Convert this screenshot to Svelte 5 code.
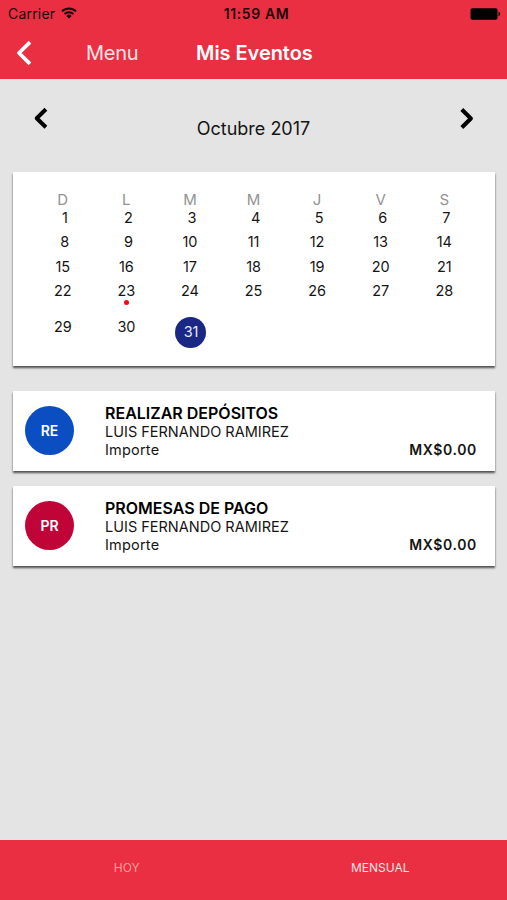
<script lang="ts">
	interface CalendarDay {
		day: number;
		selected: boolean;
		has_event: boolean;
	}

	interface CalendarEvent {
		initials: string;
		kind: string;
		title: string;
		client: string;
		amount: string;
	}

	let weekdays = ['D', 'L', 'M', 'M', 'J', 'V', 'S'];

	let selected_day = $state(31);
	let active_tab = $state('MENSUAL');
	let tabs = ['HOY', 'MENSUAL'];
	let event_days = [23];

	let events: CalendarEvent[] = [
		{
			initials: 'RE',
			kind: 'deposit',
			title: 'REALIZAR DEPÓSITOS',
			client: 'LUIS FERNANDO RAMIREZ',
			amount: 'MX$0.00'
		},
		{
			initials: 'PR',
			kind: 'promise',
			title: 'PROMESAS DE PAGO',
			client: 'LUIS FERNANDO RAMIREZ',
			amount: 'MX$0.00'
		}
	];

	// October 2017 starts on a Sunday, so no leading blanks
	function calendar_weeks(selected: number): CalendarDay[][] {
		let weeks: CalendarDay[][] = [];
		for (let i = 0; i < 31; i++) {
			if (i % 7 == 0) {
				weeks.push([]);
			}
			let day = i + 1;
			weeks[weeks.length - 1].push({
				day,
				selected: day == selected,
				has_event: event_days.includes(day)
			});
		}
		return weeks;
	}

	let weeks = $derived(calendar_weeks(selected_day));
</script>

<div class="screen">
	<header>
		<div class="status">
			<div class="carrier">
				<span>Carrier</span>
				<svg width="16" height="12" viewBox="0 0 16 12" fill="none" stroke="#1c0508">
					<path d="M1 4.3a10 10 0 0 1 14 0" stroke-width="1.9" />
					<path d="M3.5 7a6.5 6.5 0 0 1 9 0" stroke-width="1.9" />
					<path d="M8 11.6L5.3 8.9a3.9 3.9 0 0 1 5.4 0z" fill="#1c0508" stroke="none" />
				</svg>
			</div>
			<div class="time">11:59 AM</div>
			<div class="battery">
				<svg width="31" height="12" viewBox="0 0 31 12">
					<rect x="0.5" y="0.2" width="27" height="11.6" rx="1.8" />
					<path d="M28.5 3.8q1.8.6 1.8 2.2t-1.8 2.2z" />
				</svg>
			</div>
		</div>
		<nav class="navbar">
			<button class="back" aria-label="Atrás">
				<svg width="17" height="26" viewBox="0 0 17 26">
					<path
						d="M15 2.2L4 13L15 23.8"
						fill="none"
						stroke="#fff"
						stroke-width="3.8"
						stroke-linejoin="round"
					/>
				</svg>
			</button>
			<span class="menu">Menu</span>
			<h1>Mis Eventos</h1>
		</nav>
	</header>

	<main>
		<div class="month">
			<button aria-label="Mes anterior">
				<svg width="16" height="22" viewBox="0 0 16 22">
					<path
						d="M13.9 2.2L4.7 11.2l9.2 9"
						fill="none"
						stroke="#000"
						stroke-width="4"
						stroke-linejoin="round"
					/>
				</svg>
			</button>
			<h2>Octubre 2017</h2>
			<button aria-label="Mes siguiente">
				<svg width="16" height="22" viewBox="0 0 16 22">
					<path
						d="M2.8 2.5l9.1 9l-9.1 9"
						fill="none"
						stroke="#000"
						stroke-width="4"
						stroke-linejoin="round"
					/>
				</svg>
			</button>
		</div>

		<section class="card calendar">
			<div class="week names">
				{#each weekdays as name}
					<span>{name}</span>
				{/each}
			</div>
			{#each weeks as week}
				<div class="week">
					{#each week as d}
						<button
							class="day"
							class:single={d.day < 10}
							class:selected={d.selected}
							onclick={() => (selected_day = d.day)}
						>
							<span>{d.day}</span>
							{#if d.has_event}
								<i class="dot"></i>
							{/if}
						</button>
					{/each}
				</div>
			{/each}
		</section>

		<section class="events">
			{#each events as e}
				<article class="card event">
					<div class="avatar {e.kind}">{e.initials}</div>
					<div class="info">
						<h3>{e.title}</h3>
						<p>{e.client}</p>
						<p class="row"><span class="label">Importe</span><strong>{e.amount}</strong></p>
					</div>
				</article>
			{/each}
		</section>
	</main>

	<footer>
		{#each tabs as tab}
			<button class:active={tab == active_tab} onclick={() => (active_tab = tab)}>{tab}</button>
		{/each}
	</footer>
</div>

<style>
	:global(body) {
		margin: 0;
	}

	.screen {
		display: flex;
		flex-direction: column;
		height: 900px;
		background-color: #e4e4e4;
		color: #151515;
		font-family: Inter, 'Liberation Sans', sans-serif;
		font-size: 15px;
	}

	h1,
	h2,
	h3,
	p {
		margin: 0;
	}

	button {
		padding: 0;
		border: none;
		background: none;
		color: inherit;
		font: inherit;
	}

	svg {
		display: block;
	}

	header {
		height: 79px;
		background-color: #e92f41;
	}

	.status {
		display: grid;
		grid-template-columns: 1fr auto 1fr;
		align-items: center;
		height: 27px;
		padding: 0 6px 0 8px;
		color: #1c0508;
		font-size: 14px;
	}

	.carrier {
		display: flex;
		align-items: center;
		gap: 6px;
		letter-spacing: 0.2px;
	}

	.carrier svg {
		margin-bottom: 2px;
	}

	.time {
		padding-left: 4px;
		font-weight: 600;
		letter-spacing: 0.6px;
	}

	.battery {
		justify-self: end;
	}

	.navbar {
		display: flex;
		align-items: center;
		height: 51px;
		padding-left: 15px;
		color: #fff;
		font-size: 20px;
	}

	.menu {
		width: 110px;
		margin-left: 54px;
		color: #ffe4e6;
		letter-spacing: -0.3px;
	}

	h1 {
		font-size: 20px;
		font-weight: 600;
		letter-spacing: -0.05px;
	}

	main {
		flex: 1;
		padding: 0 12px 0 13px;
	}

	.month {
		display: flex;
		justify-content: space-between;
		height: 65px;
		padding: 28px 20px 0 19px;
	}

	.month button {
		height: 22px;
	}

	h2 {
		margin-top: 11px;
		font-size: 18px;
		font-weight: 400;
		line-height: 22px;
	}

	.card {
		background-color: #fff;
		box-shadow: 0 1.5px 2px rgba(0, 0, 0, 0.65);
	}

	.calendar {
		box-sizing: border-box;
		height: 194px;
		padding: 21px 19px 0 18px;
	}

	.week {
		display: grid;
		grid-template-columns: repeat(7, 1fr);
		justify-items: center;
		align-items: start;
	}

	.names {
		height: 13px;
		line-height: 13px;
		color: #929292;
	}

	.day {
		display: flex;
		flex-direction: column;
		align-items: center;
		font-size: 14.5px;
		letter-spacing: -0.15px;
		line-height: 24.4px;
	}

	.day.single {
		padding-left: 4px;
	}

	.dot {
		width: 5px;
		height: 5px;
		margin: -4px 0 10px;
		border-radius: 50%;
		background-color: #f5090f;
	}

	.day.selected {
		justify-content: center;
		width: 31px;
		height: 31px;
		margin: 2px 0 0 2px;
		border-radius: 50%;
		background-color: #1a2785;
		color: #e9ebff;
	}

	.events {
		display: flex;
		flex-direction: column;
		gap: 15px;
		margin-top: 25px;
	}

	.event {
		display: flex;
		align-items: center;
		height: 80px;
		padding: 0 18px 0 12px;
	}

	.avatar {
		width: 49px;
		height: 49px;
		margin: 0 31px 1px 0;
		border-radius: 50%;
		color: #fff;
		font-size: 14px;
		font-weight: 600;
		line-height: 49px;
		text-align: center;
	}

	.deposit {
		background-color: #0b4ec2;
	}

	.promise {
		background-color: #c00438;
	}

	.info {
		flex: 1;
		padding-top: 2px;
		font-size: 14.5px;
		line-height: 18.6px;
	}

	h3 {
		color: #000;
		font-size: 16px;
		font-weight: 600;
	}

	.row {
		display: flex;
		justify-content: space-between;
	}

	.label {
		letter-spacing: 0.2px;
	}

	strong {
		font-size: 14px;
		font-weight: 600;
		letter-spacing: 0.65px;
	}

	footer {
		display: grid;
		grid-template-columns: 1fr 1fr;
		height: 60px;
		background-color: #e92f41;
	}

	footer button {
		padding-bottom: 5px;
		color: #f4a09b;
		font-size: 12px;
	}

	footer button.active {
		color: #ffe1e2;
	}
</style>
